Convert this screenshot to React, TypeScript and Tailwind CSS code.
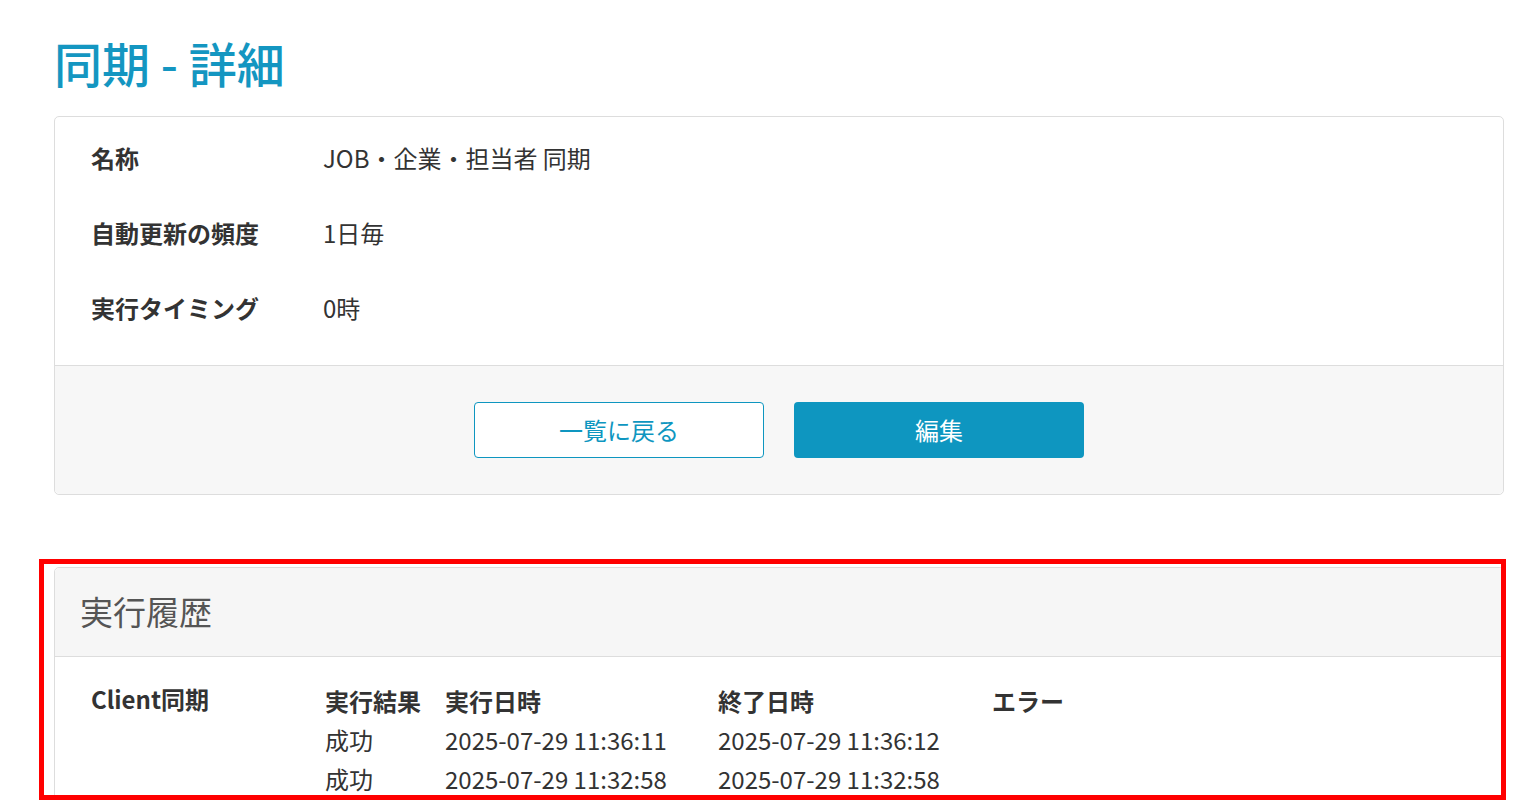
import React from "react"

const details = [
  { label: "名称", value: "JOB・企業・担当者 同期" },
  { label: "自動更新の頻度", value: "1日毎" },
  { label: "実行タイミング", value: "0時" },
]

const history = [
  { result: "成功", startedAt: "2025-07-29 11:36:11", endedAt: "2025-07-29 11:36:12", error: "" },
  { result: "成功", startedAt: "2025-07-29 11:32:58", endedAt: "2025-07-29 11:32:58", error: "" },
]

export default function App() {
  return (
    <div className="relative h-[800px] overflow-hidden bg-white pl-[54px] pr-[27px] pt-[33px] font-['Noto_Sans_CJK_JP','Noto_Sans',sans-serif] text-[#333]">
      {/* Title */}
      <h1 className="text-[48px] font-medium leading-[58px] text-[#1496c1]">同期 - 詳細</h1>

      {/* Detail card */}
      <div className="mt-[25px] rounded-[5px] border border-[#ddd] bg-white">
        <div className="px-[36px] pt-[3px] pb-[20px]">
          {details.map((row) => (
            <div key={row.label} className="flex h-[75px] items-center text-[24px]">
              <div className="w-[232px] font-bold">{row.label}</div>
              <div>{row.value}</div>
            </div>
          ))}
        </div>
        <div className="flex justify-center gap-[30px] rounded-b-[5px] border-t border-[#ddd] bg-[#f7f7f7] py-[36px]">
          <button className="flex h-[56px] w-[290px] items-center justify-center rounded-[4px] border border-[#0e96c0] bg-white text-[24px] text-[#0e96c0]">
            一覧に戻る
          </button>
          <button className="flex h-[56px] w-[290px] items-center justify-center rounded-[4px] bg-[#0e96c0] text-[24px] text-white">
            編集
          </button>
        </div>
      </div>

      {/* History card */}
      <div className="mt-[72px] rounded-[5px] border border-[#ddd] bg-white">
        <div className="flex h-[89px] items-center rounded-t-[5px] border-b border-[#ddd] bg-[#f6f6f6] px-[25px]">
          <h2 className="text-[33px] text-[#555]">実行履歴</h2>
        </div>
        <div className="flex items-start px-[36px] pt-[24px] pb-6">
          <div className="-mt-[2px] w-[234px] text-[24px] font-bold leading-[39px]">Client同期</div>
          <div className="text-[24px]">
            <div className="grid grid-cols-[120px_273px_274px_200px] font-bold leading-[39px]">
              <div>実行結果</div>
              <div>実行日時</div>
              <div>終了日時</div>
              <div>エラー</div>
            </div>
            {history.map((h, i) => (
              <div key={i} className="grid grid-cols-[120px_273px_274px_200px] leading-[39px]">
                <div>{h.result}</div>
                <div>{h.startedAt}</div>
                <div>{h.endedAt}</div>
                <div>{h.error}</div>
              </div>
            ))}
          </div>
        </div>
      </div>

      {/* Highlight frame */}
      <div className="pointer-events-none absolute left-[39px] top-[559px] h-[241px] w-[1467px] border-[5px] border-[#ff0000]" />
    </div>
  )
}
